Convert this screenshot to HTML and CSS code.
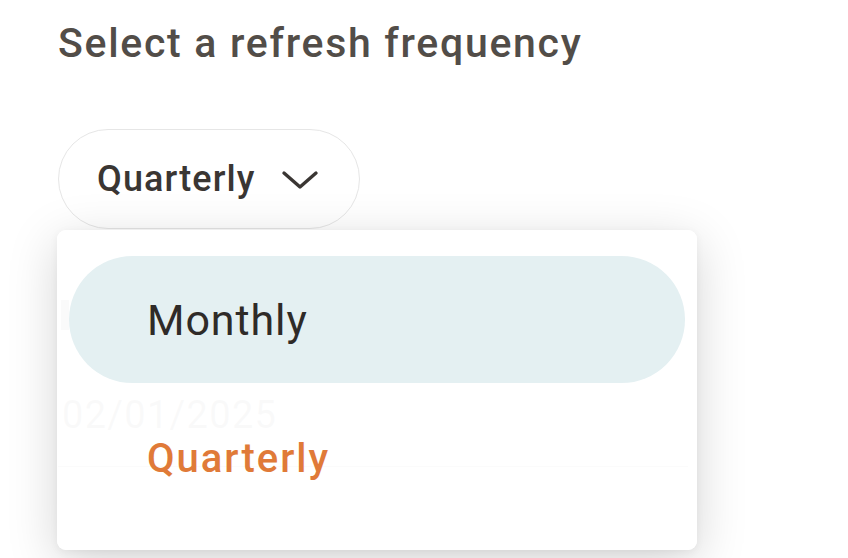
FILE: index.html
```html
<!DOCTYPE html>
<html>
<head>
<meta charset="utf-8">
<link rel="stylesheet" href="styles.css">
</head>
<body>
<div class="page">
  <h1 class="title">Select a refresh frequency</h1>
  <div class="select-wrap">
    <button class="select">
      <span class="select-label">Quarterly</span>
      <svg class="chev" width="38" height="22" viewBox="0 0 38 22"><path d="M3 4 L19 18 L35 4" fill="none" stroke="#3a3633" stroke-width="3.4" stroke-linecap="round" stroke-linejoin="round"/></svg>
    </button>
    <div class="behind">
      <div class="behind-mark"></div>
      <div class="behind-date">02/01/2025</div>
      <div class="behind-line"></div>
    </div>
    <ul class="menu">
      <li class="opt opt-hover">Monthly</li>
      <li class="opt opt-selected">Quarterly</li>
    </ul>
  </div>
</div>
</body>
</html>
```

FILE: styles.css
```css
* { box-sizing: border-box; }
html, body { margin: 0; padding: 0; background: #ffffff; }
body { font-family: Roboto, "Noto Sans", sans-serif; width: 848px; height: 558px; overflow: hidden; }
.page { padding: 18px 0 0 58px; }
.title {
  margin: 0;
  font-size: 41px;
  font-weight: 500;
  color: #524d48;
  line-height: 50px;
  letter-spacing: 1.7px;
}
.select-wrap { position: relative; margin-top: 61px; }
.select {
  display: flex;
  align-items: center;
  gap: 25px;
  height: 100px;
  width: 302px;
  padding: 0 0 0 38px;
  border: 1.5px solid #e6e6e6;
  border-radius: 50px;
  background: #fff;
  font-family: inherit;
  cursor: pointer;
}
.select-label { font-size: 36px; font-weight: 500; color: #3a3633; letter-spacing: 1.1px; }
.chev { margin-top: 2px; }
.behind { position: absolute; left: 0; top: 101px; width: 640px; }
.behind-mark { position: absolute; left: 3px; top: 70px; width: 8px; height: 30px; background: #c9c9c9; }
.behind-date { position: absolute; left: 4px; top: 163px; font-size: 38px; color: #c4c4c4; letter-spacing: 1.3px; }
.behind-line { position: absolute; left: 0; top: 236px; width: 630px; height: 1px; background: #d0d0d0; }
.menu {
  position: absolute;
  left: -1px;
  top: 101px;
  width: 640px;
  height: 320px;
  margin: 0;
  padding: 26px 12px 0 12px;
  list-style: none;
  background: rgba(255,255,255,0.9);
  border-radius: 9px;
  box-shadow: 0 12px 50px rgba(0,0,0,0.17), 0 2px 8px rgba(0,0,0,0.05);
}
.opt {
  height: 127px;
  display: flex;
  align-items: center;
  padding-left: 78px;
  border-radius: 64px;
  font-size: 43px;
  letter-spacing: 0.9px;
}
.opt-hover { background: #e4f0f2; color: #2f2b28; }
.opt-selected { height: 150px; color: #e07a38; font-weight: 500; font-size: 40px; letter-spacing: 2px; }
```
